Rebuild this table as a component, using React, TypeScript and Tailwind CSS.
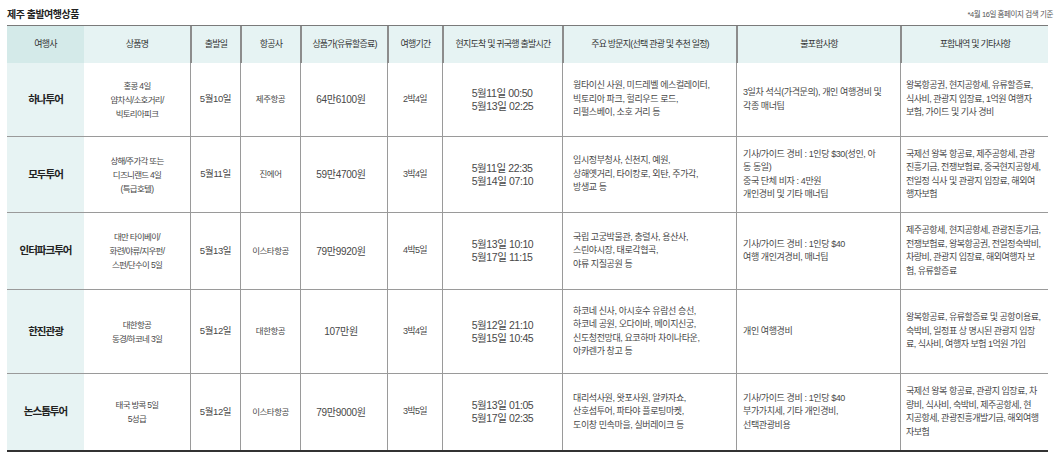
import React from "react";

type Row = {
  agency: string;
  product: string[];
  date: string;
  airline: string;
  price: string;
  period: string;
  times: string[];
  visits: string[];
  excluded: string[];
  included: string[];
  h: string;
};

const rows: Row[] = [
  {
    agency: "하나투어",
    product: ["홍콩 4일", "얌차식/소호거리/", "빅토리아피크"],
    date: "5월10일",
    airline: "제주항공",
    price: "64만6100원",
    period: "2박4일",
    times: ["5월11일 00:50", "5월13일 02:25"],
    visits: ["웡타이신 사원, 미드레벨 에스컬레이터,", "빅토리아 파크, 헐리우드 로드,", "리펄스베이, 소호 거리 등"],
    excluded: ["3일차 석식(가격문의), 개인 여행경비 및", "각종 매너팁"],
    included: ["왕복항공권, 현지공항세, 유류할증료,", "식사비, 관광지 입장료, 1억원 여행자", "보험, 가이드 및 기사 경비"],
    h: "h-[73px]",
  },
  {
    agency: "모두투어",
    product: ["상해/주가각 또는", "디즈니랜드 4일", "(특급호텔)"],
    date: "5월11일",
    airline: "진에어",
    price: "59만4700원",
    period: "3박4일",
    times: ["5월11일 22:35", "5월14일 07:10"],
    visits: ["임시정부청사, 신천지, 예원,", "상해옛거리, 타이캉로, 외탄, 주가각,", "방생교 등"],
    excluded: ["기사/가이드 경비 : 1인당 $30(성인, 아", "동 동일)", "중국 단체 비자 : 4만원", "개인경비 및 기타 매너팁"],
    included: ["국제선 왕복 항공료, 제주공항세, 관광", "진흥기금, 전쟁보험료, 중국현지공항세,", "전일정 식사 및 관광지 입장료, 해외여", "행자보험"],
    h: "h-[76px]",
  },
  {
    agency: "인터파크투어",
    product: ["대만 타이베이/", "화련/야류/지우펀/", "스펀/단수이 5일"],
    date: "5월13일",
    airline: "이스타항공",
    price: "79만9920원",
    period: "4박5일",
    times: ["5월13일 10:10", "5월17일 11:15"],
    visits: ["국립 고궁박물관, 충렬사, 용산사,", "스린야시장, 태로각협곡,", "야류 지질공원 등"],
    excluded: ["기사/가이드 경비 : 1인당 $40", "여행 개인겨경비, 매너팁"],
    included: ["제주공항세, 현지공항세, 관광진흥기금,", "전쟁보험료, 왕복항공권, 전일정숙박비,", "차량비, 관광지 입장료, 해외여행자 보", "험, 유류할증료"],
    h: "h-[77px]",
  },
  {
    agency: "한진관광",
    product: ["대한항공", "동경/하코네 3일"],
    date: "5월12일",
    airline: "대한항공",
    price: "107만원",
    period: "3박4일",
    times: ["5월12일 21:10", "5월15일 10:45"],
    visits: ["하코네 신사, 아시호수 유람선 승선,", "하코네 공원, 오다이바, 메이지신궁,", "신도청전망대, 요코하마 차이나타운,", "아카렌가 창고 등"],
    excluded: ["개인 여행경비"],
    included: ["왕복항공료, 유류할증료 및 공항이용료,", "숙박비, 일정표 상 명시된 관광지 입장", "료, 식사비, 여행자 보험 1억원 가입"],
    h: "h-[84px]",
  },
  {
    agency: "논스톱투어",
    product: ["태국 방콕 5일", "5성급"],
    date: "5월12일",
    airline: "이스타항공",
    price: "79만9000원",
    period: "3박5일",
    times: ["5월13일 01:05", "5월17일 02:35"],
    visits: ["대리석사원, 왓포사원, 알카자쇼,", "산호섬투어, 파타야 플로팅마켓,", "도이창 민속마을, 실버레이크 등"],
    excluded: ["기사/가이드 경비 : 1인당 $40", "부가가치세, 기타 개인경비,", "선택관광비용"],
    included: ["국제선 왕복 항공료, 관광지 입장료, 차", "량비, 식사비, 숙박비, 제주공항세, 현", "지공항세, 관광진흥개발기금, 해외여행", "자보험"],
    h: "h-[77px]",
  },
];

const headers = [
  "여행사",
  "상품명",
  "출발일",
  "항공사",
  "상품가(유류할증료)",
  "여행기간",
  "현지도착 및 귀국행 출발시간",
  "주요 방문지(선택 관광 및 추천 일정)",
  "불포함사항",
  "포함내역 및 기타사항",
];

const cols = "grid grid-cols-[77px_106px_50px_60px_87px_55px_120px_174px_164px_148px]";

function Lines({ lines, className }: { lines: string[]; className: string }) {
  return (
    <div className={className}>
      {lines.map((l, i) => (
        <div key={i} className="whitespace-nowrap">
          {l}
        </div>
      ))}
    </div>
  );
}

export default function App() {
  return (
    <div className="h-[458px] w-[1055px] overflow-hidden bg-white font-['Liberation_Sans','Noto_Sans_CJK_KR',sans-serif] text-[#484848]">
      {/* 제목 */}
      <div className="flex h-[25px] items-center justify-between pl-[7px] pr-[2px] pt-[4px]">
        <span className="text-[10px] font-semibold tracking-[-0.5px] text-[#222]">제주 출발여행상품</span>
        <span className="text-[7.5px] tracking-[-0.4px] text-[#555]">*4월 16일 홈페이지 검색 기준</span>
      </div>

      <div className="ml-[7px] w-[1041px] border-b-2 border-[#333]">
        {/* 헤더 */}
        <div className={`${cols} h-[38px] border-t border-[#7a7a7a] text-[9px] tracking-[-0.8px] text-[#333]`}>
          {headers.map((h, i) => (
            <div
              key={h}
              className={`flex items-center justify-center whitespace-nowrap ${
                i === 0 ? "bg-[#d4eae9]" : "bg-[#e6f3f3]"
              } ${i >= 2 ? "border-l-2 border-[#8c8c8c]" : ""}`}
            >
              {h}
            </div>
          ))}
        </div>

        {rows.map((r, i) => (
          <div key={r.agency} className={`${cols} ${r.h} ${i > 0 ? "border-t border-[#9a9a9a]" : ""}`}>
            <div className="flex items-center justify-center bg-[#e7f3f3] text-[10.5px] font-semibold tracking-[-1px] text-[#222]">
              {r.agency}
            </div>
            <div className="flex items-center justify-center">
              <Lines lines={r.product} className="text-center text-[8.5px] leading-[14px] tracking-[-0.7px]" />
            </div>
            <div className="flex items-center justify-center border-l border-[#9a9a9a] text-[9.5px] tracking-[-0.4px]">
              {r.date}
            </div>
            <div className="flex items-center justify-center border-l border-[#9a9a9a] text-[8.5px] tracking-[-0.5px]">
              {r.airline}
            </div>
            <div className="flex items-center justify-center border-l border-[#9a9a9a] pr-[6px] text-[10px] tracking-[-0.3px]">
              {r.price}
            </div>
            <div className="flex items-center justify-center border-l border-[#9a9a9a] text-[9px] tracking-[-0.7px]">
              {r.period}
            </div>
            <div className="flex items-center justify-center border-l border-[#9a9a9a]">
              <Lines lines={r.times} className="text-[10.5px] leading-[13px] tracking-[-0.4px]" />
            </div>
            <div className="flex items-center border-l border-[#9a9a9a] pl-[10px]">
              <Lines lines={r.visits} className="text-[9px] leading-[13.5px] tracking-[-0.4px]" />
            </div>
            <div className="flex items-center border-l border-[#9a9a9a] pl-[6px]">
              <Lines lines={r.excluded} className="text-[9px] leading-[13.5px] tracking-[-0.4px]" />
            </div>
            <div className="flex items-center border-l border-[#9a9a9a] pl-[5px]">
              <Lines lines={r.included} className="text-[9px] leading-[13.5px] tracking-[-0.5px]" />
            </div>
          </div>
        ))}
      </div>
    </div>
  );
}
